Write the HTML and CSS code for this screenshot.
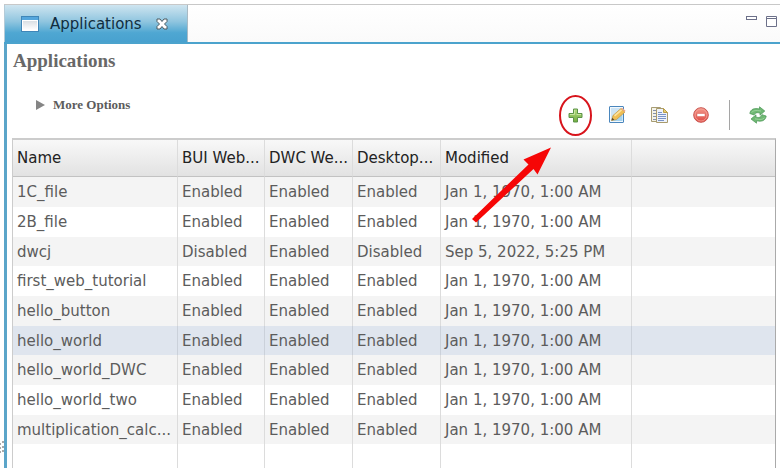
FILE: index.html
```html
<!DOCTYPE html>
<html lang="en">
<head>
<meta charset="utf-8">
<title>Applications</title>
<link rel="stylesheet" href="styles.css">
</head>
<body>
<div class="sash" aria-hidden="true">
  <svg width="4" height="12" viewBox="0 0 4 12" fill="#a9a9a9"><path d="M0 2h1v2H0zM2 0h2v2H2zM0 6h1v2H0zM2 5h2v2H2zM0 10h1v2H0zM2 9h2v2H2z"/></svg>
</div>
<div class="view">
  <header class="tabbar">
    <div class="tab">
      <svg width="18" height="16" viewBox="0 0 18 16">
        <defs><linearGradient id="pane" x1="0" y1="0" x2="0" y2="1"><stop offset="0" stop-color="#d9dfe4"/><stop offset="1" stop-color="#fff"/></linearGradient></defs>
        <rect x=".5" y=".5" width="17" height="15" fill="#fff" stroke="#3f86b8"/>
        <rect x="1" y="1" width="16" height="3" fill="#54a6dc"/>
        <rect x="2" y="5" width="14" height="9" fill="url(#pane)"/>
      </svg>
      <span>Applications</span>
      <button class="close" aria-label="Close">
        <svg width="12" height="12" viewBox="0 0 12 12"><path d="M1 1h3l2 2.500 2-2.500h3v2.500L8.500 6 11 8.500V11H8L6 8.500 4 11H1V8.500L3.500 6 1 3.500z" fill="#fff" stroke="#4c5a60"/></svg>
      </button>
    </div>
    <div class="window-buttons">
      <button aria-label="Minimize"><svg width="12" height="12" viewBox="0 0 12 12"><rect x=".5" y=".5" width="10" height="3" fill="#fff" stroke="#6c7089"/></svg></button>
      <button aria-label="Maximize"><svg width="12" height="12" viewBox="0 0 12 12"><path d="M.5.500h10v10H.500zM1 2.500h9" fill="#fff" stroke="#6c7089"/></svg></button>
    </div>
  </header>
  <main class="content">
    <h1>Applications</h1>
    <div class="actions">
      <button class="more" aria-expanded="false"><svg width="9" height="10" viewBox="0 0 9 10"><path d="M0 0l9 5-9 5z" fill="#858585"/></svg>More Options</button>
      <div class="toolbar">
        <button class="add" aria-label="Add">
          <svg width="16" height="16" viewBox="0 0 16 16">
            <defs><linearGradient id="green" x1="0" y1="0" x2="0" y2="1"><stop offset="0" stop-color="#b5dc82"/><stop offset="1" stop-color="#71ad3f"/></linearGradient></defs>
            <path d="M6.500 2h4v4.500H15v4h-4.500V15h-4v-4.500H2v-4h4.500z" fill="url(#green)" stroke="#5c9348"/>
            <path d="M7.500 3v4.500H3M9.500 7.500H14" fill="none" stroke="#c9e6a0"/>
          </svg>
          <svg class="callout" width="140" height="140" viewBox="0 0 140 140" aria-hidden="true">
            <ellipse cx="115.500" cy="25.500" rx="15.500" ry="19.500" fill="none" stroke="#d8141c" stroke-width="2"/>
            <path d="M12 129L16 132.500 73.500 79 77.500 84.500 91 57.500 63.500 69.500 68.500 74.500z" fill="#f60606"/>
          </svg>
        </button>
        <button aria-label="Edit">
          <svg width="18" height="18" viewBox="0 0 18 18">
            <rect x="1.500" y=".5" width="14" height="16" rx=".5" fill="#f3f9fd" stroke="#4a86bd"/>
            <path d="M3 2h11v6L6 15H3z" fill="#cde4f5"/>
            <path d="M4 15h10.500V7z" fill="#a5d3ef"/>
            <path d="M3.500 14.500l1.500-5 8-7 4 3.500-8.500 7.500z" fill="#f0bf55" stroke="#c2953f" stroke-width=".7"/>
            <path d="M13 2.500l1-.8 3.600 3-1 1.300z" fill="#eda98c"/>
            <path d="M6.500 9.800l7-6" stroke="#fbe3a0" stroke-width="1.600"/>
            <path d="M3.500 14.500l.8-2.700 2 1.900z" fill="#5a4a34"/>
          </svg>
        </button>
        <button aria-label="Copy">
          <svg width="18" height="18" viewBox="0 0 18 18">
            <path d="M1.500 1.500h9v14h-9z" fill="#f4f3e8" stroke="#a79c74"/>
            <path d="M3 4.500h3M3 7.500h3M3 10.500h3M3 13.500h3" stroke="#8391ac"/>
            <path d="M6.500 2.500h7l4 4v10h-11z" fill="#edf2fb" stroke="#a99b6c"/>
            <path d="M13.500 2.500v4h4z" fill="#e9cf6c" stroke="#b99d49"/>
            <path d="M8 6.500h4M8 8.500h8M8 10.500h8M8 12.500h8M8 14.500h6" stroke="#7993c7"/>
          </svg>
        </button>
        <button aria-label="Delete">
          <svg width="16" height="16" viewBox="0 0 16 16">
            <defs><linearGradient id="red" x1="0" y1="0" x2="0" y2="1"><stop offset="0" stop-color="#f39a8c"/><stop offset="1" stop-color="#df4842"/></linearGradient></defs>
            <circle cx="8" cy="8" r="7.300" fill="url(#red)" stroke="#ca5550"/>
            <circle cx="8" cy="8" r="6" fill="none" stroke="#f4a59b" stroke-width=".8"/>
            <rect x="4" y="6.500" width="8" height="3" rx=".5" fill="#fff" stroke="#d85d53" stroke-width=".5"/>
          </svg>
        </button>
        <span class="separator"></span>
        <button aria-label="Refresh">
          <svg width="18" height="18" viewBox="0 0 18 18" fill="#6fb873" stroke="#4b9656" stroke-width=".7">
            <path d="M.8 7.500C1.500 3 5.500 1.800 10.500 3V.8L15.800 5 11 9.300V7C7.500 6.200 6 7 5 9z"/>
            <path d="M17.200 10c-.7 4.800-4.700 6-9.700 4.800v2.400L2 13l5-4.200v2.400c3.500.8 5 0 6-2.500z"/>
            <path d="M2.500 6.500C4.500 4.300 7 4 12 5M15.500 11.800C13.500 13.700 11 14 6 12.800" fill="none" stroke="#a8dba8"/>
          </svg>
        </button>
      </div>
    </div>
    <table>
      <colgroup><col class="name"><col class="client"><col class="client wide"><col class="client wide"><col class="modified"><col></colgroup>
      <thead>
        <tr><th>Name</th><th>BUI Web...</th><th>DWC We...</th><th>Desktop...</th><th>Modified</th><th></th></tr>
      </thead>
      <tbody>
        <tr><td>1C_file</td><td>Enabled</td><td>Enabled</td><td>Enabled</td><td>Jan 1, 1970, 1:00 AM</td><td></td></tr>
        <tr><td>2B_file</td><td>Enabled</td><td>Enabled</td><td>Enabled</td><td>Jan 1, 1970, 1:00 AM</td><td></td></tr>
        <tr><td>dwcj</td><td>Disabled</td><td>Enabled</td><td>Disabled</td><td>Sep 5, 2022, 5:25 PM</td><td></td></tr>
        <tr><td>first_web_tutorial</td><td>Enabled</td><td>Enabled</td><td>Enabled</td><td>Jan 1, 1970, 1:00 AM</td><td></td></tr>
        <tr><td>hello_button</td><td>Enabled</td><td>Enabled</td><td>Enabled</td><td>Jan 1, 1970, 1:00 AM</td><td></td></tr>
        <tr class="selected"><td>hello_world</td><td>Enabled</td><td>Enabled</td><td>Enabled</td><td>Jan 1, 1970, 1:00 AM</td><td></td></tr>
        <tr><td>hello_world_DWC</td><td>Enabled</td><td>Enabled</td><td>Enabled</td><td>Jan 1, 1970, 1:00 AM</td><td></td></tr>
        <tr><td>hello_world_two</td><td>Enabled</td><td>Enabled</td><td>Enabled</td><td>Jan 1, 1970, 1:00 AM</td><td></td></tr>
        <tr><td>multiplication_calc...</td><td>Enabled</td><td>Enabled</td><td>Enabled</td><td>Jan 1, 1970, 1:00 AM</td><td></td></tr>
        <tr class="blank"><td></td><td></td><td></td><td></td><td></td><td></td></tr>
      </tbody>
    </table>
  </main>
</div>
</body>
</html>
```
FILE: styles.css
```css
* {
  box-sizing: border-box;
}

body {
  margin: 0;
  padding-top: 4px;
  display: flex;
  background: #fff;
  font-family: Verdana, "DejaVu Sans", sans-serif;
  font-size: 15px;
  color: #5c5c5c;
}

button {
  display: flex;
  align-items: center;
  justify-content: center;
  padding: 0;
  border: 0;
  background: none;
  font: inherit;
  color: inherit;
}

svg {
  display: block;
  flex: none;
}

.sash {
  width: 4px;
  flex: none;
  display: flex;
  align-items: flex-end;
  padding-bottom: 15px;
}

.view {
  flex: 1;
  min-width: 0;
}

.tabbar {
  display: flex;
  justify-content: space-between;
  height: 40px;
  border-top: 1px solid #c8c8c8;
  border-bottom: 2px solid #4ba3cd;
  background: linear-gradient(#fff, #fafafa);
}

.tab {
  display: flex;
  align-items: center;
  width: 184px;
  padding-left: 16px;
  border-left: 1px solid #b4cbd8;
  border-right: 1px solid #a9bac4;
  background: linear-gradient(#cfe5f0, #8fc5df 45%, #4fa7d2 75%, #48a1cf);
  color: #102d40;
}

.tab span {
  margin-left: 11px;
}

.close {
  margin-left: 14px;
}

.window-buttons {
  display: flex;
  align-items: flex-start;
  gap: 8px;
  padding: 11px 2px 0 0;
}

.content {
  padding: 6px 4px 0 5px;
  border-left: 3px solid #5ba5c9;
}

h1 {
  margin: 0;
  font: bold 19px/22px "Liberation Serif", serif;
  color: #686868;
  padding-left: 1px;
}

.actions {
  display: flex;
  justify-content: space-between;
  align-items: flex-start;
  padding: 25px 10px 8px 24px;
}

.more {
  gap: 8px;
  font: bold 13px/16px "Liberation Serif", serif;
  color: #5c5c5c;
}

.toolbar {
  display: flex;
  align-items: center;
  gap: 26px;
  padding-top: 3px;
}

.toolbar button {
  width: 16px;
  height: 16px;
}

.separator {
  width: 1px;
  height: 30px;
  margin: 0 -6px;
  background: #a5a5a5;
}

.add {
  position: relative;
}

.callout {
  position: absolute;
  left: -107px;
  top: -17px;
  pointer-events: none;
}

table {
  width: 100%;
  table-layout: fixed;
  border-collapse: separate;
  border-spacing: 0;
  border: solid #ccc;
  border-width: 2px 1px 0;
  border-right-color: #aaa;
}

.name {
  width: 165px;
}

.client {
  width: 87px;
}

.wide {
  width: 88px;
}

.modified {
  width: 191px;
}

th,
td {
  padding: 0 0 0 4px;
  border-right: 1px solid #dcdcdc;
  text-align: left;
  white-space: nowrap;
}

th:last-child,
td:last-child {
  border-right: 0;
}

th {
  height: 37px;
  border-bottom: 1px solid #c2c2c2;
  background: linear-gradient(#f8f8f8, #e2e2e2);
  color: #222;
  font-weight: normal;
}

td {
  height: 30px;
}

tr:nth-child(3n) td {
  height: 29px;
}

tbody tr:nth-child(odd) {
  background: #f4f4f4;
}

tbody .selected {
  background: #dfe5ee;
}

.selected td {
  border-right-color: #cbd1da;
}

.blank td {
  height: 24px;
}
```
